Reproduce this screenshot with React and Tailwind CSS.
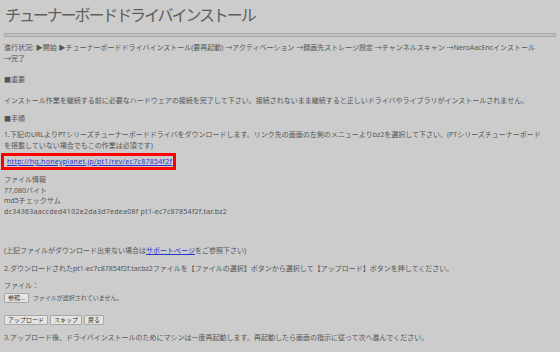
import React from 'react';

const font = { fontFamily: '"Noto Sans", "Noto Sans CJK JP", sans-serif' };

function Btn({ children }) {
  return (
    <button className="h-[10px] px-[3px] bg-[#e4e4e4] border border-[#a8a8a8] rounded-[1px] text-[6px] leading-[8px] text-[#333]">
      {children}
    </button>
  );
}

export default function App() {
  return (
    <div className="w-[560px] h-[352px] overflow-hidden bg-[#cccccc] text-[#555] px-[4px]" style={font}>
      {/* title */}
      <h1 className="h-[30px] leading-[30px] text-[16px] tracking-[-2.1px] text-[#5e5e5e] pl-[1px]">
        チューナーボードドライバインストール
      </h1>
      <div className="mt-[3px] h-[4px] border border-[#a9a9a9] bg-[#c2c2c2]"></div>

      <div className="text-[7px] leading-[11px]">
        <p className="mt-[5px]">
          進行状況: ▶開始 ▶チューナーボードドライバインストール(要再起動) →アクティベーション →録画先ストレージ設定 →チャンネルスキャン →NeroAacEncインストール
          <br />→完了
        </p>
        <p className="mt-[10px]">■重要</p>
        <p className="mt-[10px]">インストール作業を継続する前に必要なハードウェアの接続を完了して下さい。接続されないまま継続すると正しいドライバやライブラリがインストールされません。</p>
        <p className="mt-[7px]">■手順</p>
        <p className="mt-[5px]">
          1.下記のURLよりPTシリーズチューナーボードドライバをダウンロードします。リンク先の画面の左側のメニューよりbz2を選択して下さい。(PTシリーズチューナーボード
          <br />を搭載していない場合でもこの作業は必須です)
        </p>
        <div className="mt-[2px] -ml-[3px] w-[175px] h-[17px] border-[3px] border-[#ff0000] flex items-center pl-[3px]">
          <a href="#" className="text-[#2a35cc] underline tracking-[0.28px]">http://hg.honeyplanet.jp/pt1/rev/ec7c87854f2f</a>
        </div>
        <div className="mt-[5px] leading-[10.7px]">
          <div>ファイル情報</div>
          <div>77,080バイト</div>
          <div>md5チェックサム</div>
          <div className="tracking-[0.27px]">dc34363aaccded4102e2da3d7edea08f pt1-ec7c87854f2f.tar.bz2</div>
        </div>
        <p className="mt-[27px]">
          (上記ファイルがダウンロード出来ない場合は<a href="#" className="text-[#2a35cc] underline">サポートページ</a>をご参照下さい)
        </p>
        <p className="mt-[7px]">2.ダウンロードされたpt1-ec7c87854f2f.tar.bz2ファイルを【ファイルの選択】ボタンから選択して【アップロード】ボタンを押してください。</p>
        <p className="mt-[6px]">ファイル：</p>
        <div className="mt-[2px] flex items-center gap-[4px]">
          <Btn>参照...</Btn>
          <span className="text-[6px]">ファイルが選択されていません。</span>
        </div>
        <div className="mt-[11px] flex items-center gap-[2px]">
          <Btn>アップロード</Btn>
          <Btn>スキップ</Btn>
          <Btn>戻る</Btn>
        </div>
        <p className="mt-[7px]">3.アップロード後、ドライバインストールのためにマシンは一度再起動します。再起動したら画面の指示に従って次へ進んでください。</p>
      </div>
    </div>
  );
}
